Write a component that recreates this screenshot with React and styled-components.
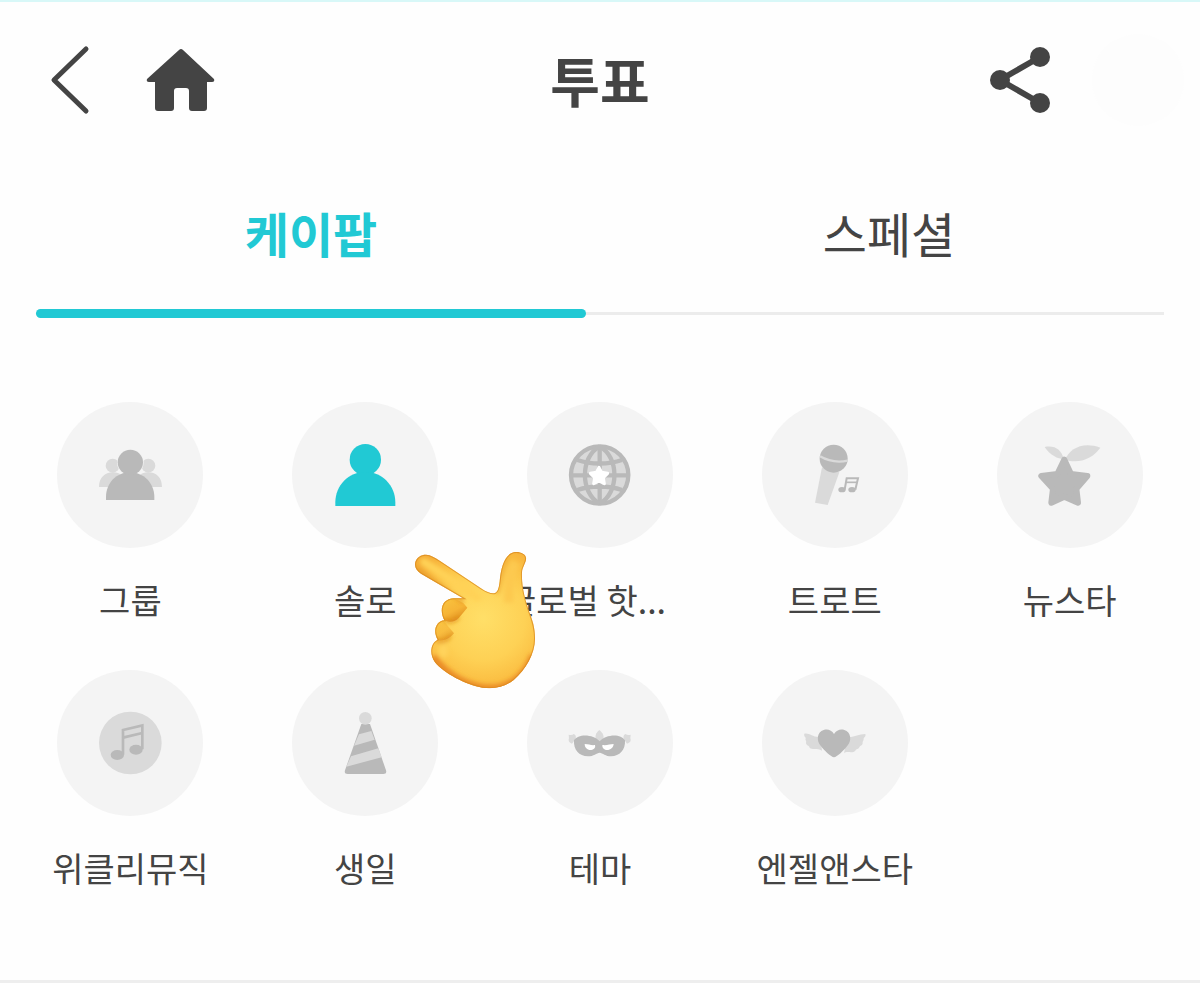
import { useState } from "react";
import styled, { createGlobalStyle } from "styled-components";

const GlobalStyle = createGlobalStyle`
    * {
        box-sizing: border-box;
    }
    body {
        margin: 0;
        background-color: #ffffff;
        color: #444444;
        font-family: "Noto Sans CJK KR", "Noto Sans", sans-serif;
    }
    button {
        margin: 0;
        padding: 0;
        border: none;
        background: none;
        color: inherit;
        font-family: inherit;
        cursor: pointer;
    }
    svg {
        display: block;
    }
`;
const Page = styled.div`
    border-top: 2px solid #d8f8f8;
    border-bottom: 3px solid #eeeeee;
    background-color: #fefefe;
`;
const Header = styled.header`
    display: grid;
    grid-template-columns: 1fr auto 1fr;
    align-items: center;
    height: 156px;
    padding: 0 16px;
`;
const HeaderGroup = styled.div`
    display: flex;
    align-items: center;
    justify-content: ${(props) => (props.$end ? "flex-end" : "flex-start")};
    gap: ${(props) => (props.$end ? "32px" : "36px")};
    padding-left: 24px;
`;
const IconButton = styled.button`
    width: 70px;
    height: 80px;
`;
const Profile = styled.span`
    width: 92px;
    height: 92px;
    border-radius: 50%;
    background-color: #fdfdfd;
`;
const Title = styled.h1`
    margin: 0;
    font-size: 54px;
    line-height: 76px;
    font-weight: 700;
`;
const Tabs = styled.div`
    display: grid;
    grid-template-columns: 1fr 1fr;
    column-gap: 28px;
    margin: 0 36px;
    background: linear-gradient(#ececec, #ececec) 0 calc(100% - 3px) / 100% 3px no-repeat;
`;
const Tab = styled.button`
    height: 160px;
    padding-bottom: 4px;
    border-bottom: 9px solid transparent;
    font-size: 48px;
    line-height: 72px;
    font-weight: ${(props) => (props.$active ? 700 : 400)};
    color: ${(props) => (props.$active ? "#21c9d4" : "#444444")};
    position: relative;

    &::after {
        content: "";
        position: absolute;
        left: 0;
        right: 0;
        bottom: -9px;
        height: 9px;
        border-radius: 5px;
        background-color: ${(props) => (props.$active ? "#21c9d4" : "transparent")};
    }
`;
const Categories = styled.ul`
    display: grid;
    grid-template-columns: repeat(5, 1fr);
    row-gap: 44px;
    margin: 0;
    padding: 84px 13px 86px;
    list-style: none;
`;
const Category = styled.li`
    position: relative;
`;
const CategoryButton = styled.button`
    display: flex;
    flex-direction: column;
    align-items: center;
    gap: 26px;
    width: 100%;
`;
const Circle = styled.span`
    display: flex;
    align-items: center;
    justify-content: center;
    width: 146px;
    height: 146px;
    border-radius: 50%;
    background-color: #f4f4f4;
    color: ${(props) => (props.$active ? "#21c9d4" : "#b9b9b9")};
`;
const Label = styled.span`
    width: 190px;
    font-size: 34px;
    line-height: 52px;
    text-align: ${(props) => (props.$shortened ? "left" : "center")};
    white-space: nowrap;
`;
const Pointer = styled.svg`
    position: absolute;
    left: 152px;
    top: 138px;
    z-index: 1;
    pointer-events: none;
`;

const DARK = "#b9b9b9";
const LIGHT = "#dadada";

function Icon({ children }) {
    return <svg width="80" height="80" viewBox="0 0 240 240" aria-hidden="true">{children}</svg>;
}

const GroupIcon = () => <Icon>
    <g fill={LIGHT}>
        <circle cx="68" cy="92" r="21" />
        <circle cx="175" cy="92" r="21" />
        <path d="M27 156c0-27 17-44 42-44s40 17 40 44zM133 156c0-27 17-44 42-44s41 17 41 44z" />
    </g>
    <circle cx="121" cy="82" r="40" fill="#f4f4f4" />
    <g fill={DARK}>
        <path d="M48 195v-9c0-42 32-74 72-74s73 32 73 74v9z" />
        <circle cx="121" cy="82" r="38" />
    </g>
</Icon>;

const SoloIcon = () => <Icon>
    <circle cx="121" cy="74" r="47" fill="currentColor" />
    <path d="M31 213v-11c0-51 40-91 90-91s90 40 90 91v11z" fill="currentColor" />
</Icon>;

const GlobeIcon = () => <Icon>
    <circle cx="119" cy="120" r="86" fill={LIGHT} stroke={DARK} strokeWidth="13" />
    <g fill="none" stroke={DARK} strokeWidth="13">
        <path d="M119 34v172M33 121h172M52 75c40 14 94 14 134 0M52 165c40-14 94-14 134 0" />
        <path d="M119 34C60 66 60 174 119 206M119 34c59 32 59 140 0 172" />
    </g>
    <path d="M117 97l8 15 18 3-13 13 3 18-16-8-16 8 3-18-13-13 18-3z" fill="#fff" stroke="#fff" strokeWidth="9" strokeLinejoin="round" />
</Icon>;

const MicIcon = () => <Icon>
    <path d="M81 97l52 15-35 98-38-7z" fill={LIGHT} />
    <circle cx="116" cy="71" r="42" fill={DARK} />
    <path d="M75 64c24 14 53 19 83 13" fill="none" stroke={LIGHT} strokeWidth="7" />
    <g fill={DARK}>
        <ellipse cx="141" cy="164" rx="11" ry="8" />
        <ellipse cx="171" cy="164" rx="11" ry="8" />
        <path d="M149 164l6-34h34l-8 34" fill="none" stroke={DARK} strokeWidth="6" />
        <path d="M153 142h34" stroke={DARK} strokeWidth="5" />
    </g>
</Icon>;

const StarIcon = () => <Icon>
    <g fill={LIGHT}>
        <path d="M105 74C119 41 158 19 211 38c-25 35-66 49-106 36z" />
        <path d="M101 72C83 72 61 61 44 36c31-6 51 9 57 36z" />
    </g>
    <path d="M103 74l20 43 49 6-33 38 5 42-41-18-39 18 5-42-35-38 48-6z" fill={DARK} stroke={DARK} strokeWidth="18" strokeLinejoin="round" />
</Icon>;

const MusicIcon = () => <Icon>
    <circle cx="121" cy="120" r="94" fill={LIGHT} />
    <g fill={DARK}>
        <ellipse cx="82" cy="156" rx="20" ry="15" />
        <ellipse cx="138" cy="140" rx="20" ry="15" />
    </g>
    <path d="M99 155V81l58-14v72M99 104l58-14" fill="none" stroke={DARK} strokeWidth="8" />
</Icon>;

const BirthdayIcon = () => <Icon>
    <path d="M109 63h26l48 139q3 11-8 11H68q-11 0-8-11z" fill={DARK} />
    <path d="M102 94l37-10 10 26-62 18zM78 160l82-24 10 27-106 28z" fill={LIGHT} />
    <circle cx="121" cy="46" r="19" fill={LIGHT} />
</Icon>;

const ThemeIcon = () => <Icon>
    <g fill={LIGHT}>
        <path d="M118 81c-10 8-14 19-10 29l10 10 11-10c5-10-1-21-11-29z" />
        <path d="M26 95q11 2 15-2 10 4 5 16l-10 13c-8-2-12-8-9-16zM212 95q-11 2-15-2-10 4-5 16l9 13c9-2 13-8 10-16z" />
    </g>
    <path d="M42 112c12-21 58-19 77 3 19-22 64-24 76-3 2 28-16 48-42 48-16 0-25-10-34-11-9 1-18 11-35 11-27 0-44-20-42-48z" fill={DARK} />
    <path d="M74 123c12 0 20 5 31 3 3 10-6 15-14 15-9 0-17-7-17-18zM161 123c-11 0-20 5-34 3-1 10 7 15 14 15 11 0 19-7 20-18z" fill="#fff" />
</Icon>;

const AngelIcon = () => <Icon>
    <g fill={LIGHT}>
        <path d="M77 101c-22 4-34-13-49-9-3 9 6 11 4 14-3 5 4 9 1 14 1 9 9 6 11 14 8 8 22-1 37 9z" />
        <path d="M157 102c21 2 33-9 54-9 3 9-6 11-5 14 1 5-5 8-3 13-1 9-8 7-10 13-3 7-9 4-12 10-10 11-24-1-34 8z" />
    </g>
    <path d="M117 163c-8 0-31-22-39-33-15-17-12-43 8-49 13-4 24 1 31 12 7-11 19-16 31-12 20 6 24 32 8 49-8 11-31 33-39 33z" fill={DARK} />
</Icon>;

const HAND = "M78 44c14 0 27 9 41 18l126 84c16 10 29 16 40 13 9-4 12-17 14-34 3-38 13-73 34-85 17-9 44-1 45 14 2 12-11 26-12 43-2 43 10 86 23 122 8 22 16 42 16 75 1 45-27 94-64 126-25 20-58 28-93 23-50-8-118-44-143-76-17-23-15-57 8-68-17-30-2-56 20-58-17-34-5-65 29-66l27 0L63 101C47 90 43 79 46 66c4-14 17-22 32-22z";

function PointingHand() {
    return <Pointer width="150" height="160" viewBox="0 0 450 480" aria-hidden="true">
        <defs>
            <radialGradient id="palm" gradientUnits="userSpaceOnUse" cx="250" cy="235" r="250">
                <stop offset="0" stopColor="#ffdf68" />
                <stop offset="0.5" stopColor="#fed155" />
                <stop offset="0.75" stopColor="#fbc044" />
                <stop offset="1" stopColor="#f4ab35" />
            </radialGradient>
            <linearGradient id="finger" x1="0" y1="0" x2="0.6" y2="1">
                <stop offset="0" stopColor="#f9c540" />
                <stop offset="0.6" stopColor="#f6b436" />
                <stop offset="1" stopColor="#e0901f" />
            </linearGradient>
            <clipPath id="handShape">
                <path d={HAND} />
            </clipPath>
            <filter id="soft" x="-20%" y="-20%" width="140%" height="140%">
                <feGaussianBlur stdDeviation="7" />
            </filter>
        </defs>
        <g clipPath="url(#handShape)">
            <path d="M0 0h450v480H0z" fill="url(#palm)" />
            <path d="M162 175c-34-1-49 34-33 62 14 13 36 9 48-4l25-30-12-14z" fill="url(#finger)" />
            <path d="M129 241c-24 3-34 33-19 58 13 6 35 2 52-19z" fill="url(#finger)" opacity="0.7" />
            <g filter="url(#soft)" fill="none">
                <path d="M50 86l140 101" stroke="#e79a27" strokeWidth="10" />
                <path d="M72 66l160 106" stroke="#ffd257" strokeWidth="24" strokeLinecap="round" />
                <path d="M290 161c15-33 11-84 37-113" stroke="#f0ad37" strokeWidth="10" />
                <path d="M346 66c-19 39-19 73-20 122" stroke="#fdc94f" strokeWidth="28" />
                <path d="M132 240c16 9 33 3 45-8M110 302c14 7 32 0 42-14" stroke="#dc8517" strokeWidth="7" />
                <path d="M98 350c45 66 132 106 200 94 50-12 84-50 102-98" stroke="#ea8c25" strokeWidth="24" />
                <ellipse cx="130" cy="333" rx="15" ry="20" fill="#ffd35c" />
            </g>
            <path d={HAND} fill="none" stroke="#d98a20" strokeWidth="6" opacity="0.75" />
        </g>
    </Pointer>;
}

const tabs = ["케이팝", "스페셜"];

const categories = [
    { name: "그룹", icon: GroupIcon },
    { name: "솔로", icon: SoloIcon, pointer: true },
    { name: "글로벌 핫...", icon: GlobeIcon, shortened: true },
    { name: "트로트", icon: MicIcon },
    { name: "뉴스타", icon: StarIcon },
    { name: "위클리뮤직", icon: MusicIcon },
    { name: "생일", icon: BirthdayIcon },
    { name: "테마", icon: ThemeIcon },
    { name: "엔젤앤스타", icon: AngelIcon },
];

export default function App() {
    const [tab, setTab] = useState("케이팝");
    const [category, setCategory] = useState("솔로");

    return <Page>
        <GlobalStyle />
        <Header>
            <HeaderGroup>
                <IconButton aria-label="뒤로">
                    <svg width="70" height="80" viewBox="0 0 70 80">
                        <path d="M46 9L14 40l32 31" fill="none" stroke="#444" strokeWidth="5" strokeLinecap="round" strokeLinejoin="round" />
                    </svg>
                </IconButton>
                <IconButton aria-label="홈">
                    <svg width="70" height="80" viewBox="0 0 70 80">
                        <path d="M33 10q2-2 4 0L68 39q1 3-2 3H61V68q0 3-3 3H46q-3 0-3-3V51q0-3-3-3H31q-3 0-3 3V68q0 3-3 3H12q-3 0-3-3V42H3q-3 0-2-3z" fill="#444" />
                    </svg>
                </IconButton>
            </HeaderGroup>
            <Title>투표</Title>
            <HeaderGroup $end>
                <IconButton aria-label="공유">
                    <svg width="70" height="80" viewBox="0 0 70 80">
                        <path d="M50 17L10 40l40 23" fill="none" stroke="#444" strokeWidth="6" />
                        <g fill="#444">
                            <circle cx="50" cy="17" r="10" />
                            <circle cx="10" cy="40" r="10" />
                            <circle cx="50" cy="63" r="10" />
                        </g>
                    </svg>
                </IconButton>
                <Profile />
            </HeaderGroup>
        </Header>
        <Tabs role="tablist">
            {tabs.map((name) => <Tab
                key={name}
                role="tab"
                aria-selected={tab === name}
                $active={tab === name}
                onClick={() => setTab(name)}
            >{name}</Tab>)}
        </Tabs>
        <Categories>
            {categories.map(({ name, icon: CategoryIcon, pointer, shortened }) => <Category key={name}>
                <CategoryButton onClick={() => setCategory(name)}>
                    <Circle $active={category === name}>
                        <CategoryIcon />
                    </Circle>
                    <Label $shortened={shortened}>{name}</Label>
                </CategoryButton>
                {pointer && <PointingHand />}
            </Category>)}
        </Categories>
    </Page>;
}
